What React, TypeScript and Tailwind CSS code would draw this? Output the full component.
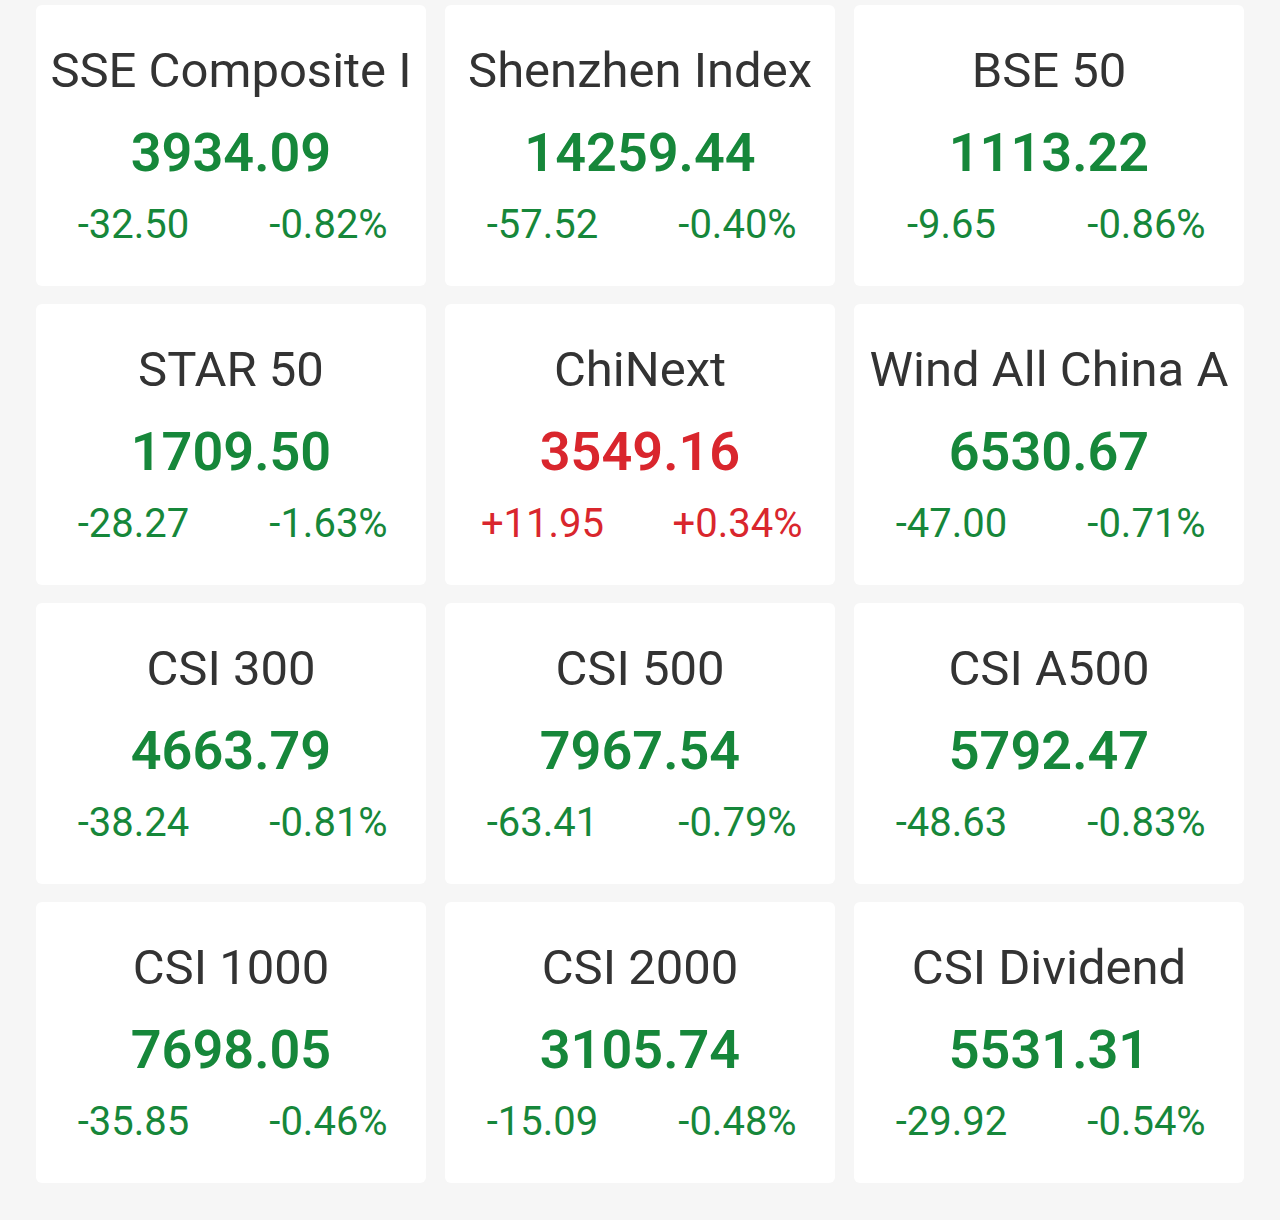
import React from 'react';

interface IndexQuote {
  name: string;
  value: string;
  change: string;
  percent: string;
}

// the first name is cut by the card in the source app, so keep what it shows
const quotes: IndexQuote[] = [
  { name: 'SSE Composite I', value: '3934.09', change: '-32.50', percent: '-0.82%' },
  { name: 'Shenzhen Index', value: '14259.44', change: '-57.52', percent: '-0.40%' },
  { name: 'BSE 50', value: '1113.22', change: '-9.65', percent: '-0.86%' },
  { name: 'STAR 50', value: '1709.50', change: '-28.27', percent: '-1.63%' },
  { name: 'ChiNext', value: '3549.16', change: '+11.95', percent: '+0.34%' },
  { name: 'Wind All China A', value: '6530.67', change: '-47.00', percent: '-0.71%' },
  { name: 'CSI 300', value: '4663.79', change: '-38.24', percent: '-0.81%' },
  { name: 'CSI 500', value: '7967.54', change: '-63.41', percent: '-0.79%' },
  { name: 'CSI A500', value: '5792.47', change: '-48.63', percent: '-0.83%' },
  { name: 'CSI 1000', value: '7698.05', change: '-35.85', percent: '-0.46%' },
  { name: 'CSI 2000', value: '3105.74', change: '-15.09', percent: '-0.48%' },
  { name: 'CSI Dividend', value: '5531.31', change: '-29.92', percent: '-0.54%' },
];

const QuoteCard: React.FC<{ quote: IndexQuote }> = ({ quote }) => {
  const up = quote.change.startsWith('+');
  const color = up ? 'text-[#d9262d]' : 'text-[#16873a]';

  return (
    <div className="h-[281px] rounded-md bg-white pt-[36px] overflow-hidden">
      <div className="px-3 whitespace-nowrap text-center text-[49px] leading-[60px] text-[#333333]">
        {quote.name}
      </div>
      <div className={`mt-[22px] text-center text-[54px] font-semibold leading-[60px] ${color}`}>
        {quote.value}
      </div>
      <div className={`mt-[17px] flex text-[40px] leading-[50px] ${color}`}>
        <span className="flex-1 text-center">{quote.change}</span>
        <span className="flex-1 text-center">{quote.percent}</span>
      </div>
    </div>
  );
};

export default function App() {
  return (
    <div
      className="min-h-[1220px] bg-[#f6f6f6] px-[36px] pt-[5px]"
      style={{ fontFamily: 'Roboto, "Noto Sans", sans-serif' }}
    >
      <div className="grid grid-cols-3 gap-x-[19px] gap-y-[18px]">
        {quotes.map((q) => (
          <QuoteCard key={q.name} quote={q} />
        ))}
      </div>
    </div>
  );
}
